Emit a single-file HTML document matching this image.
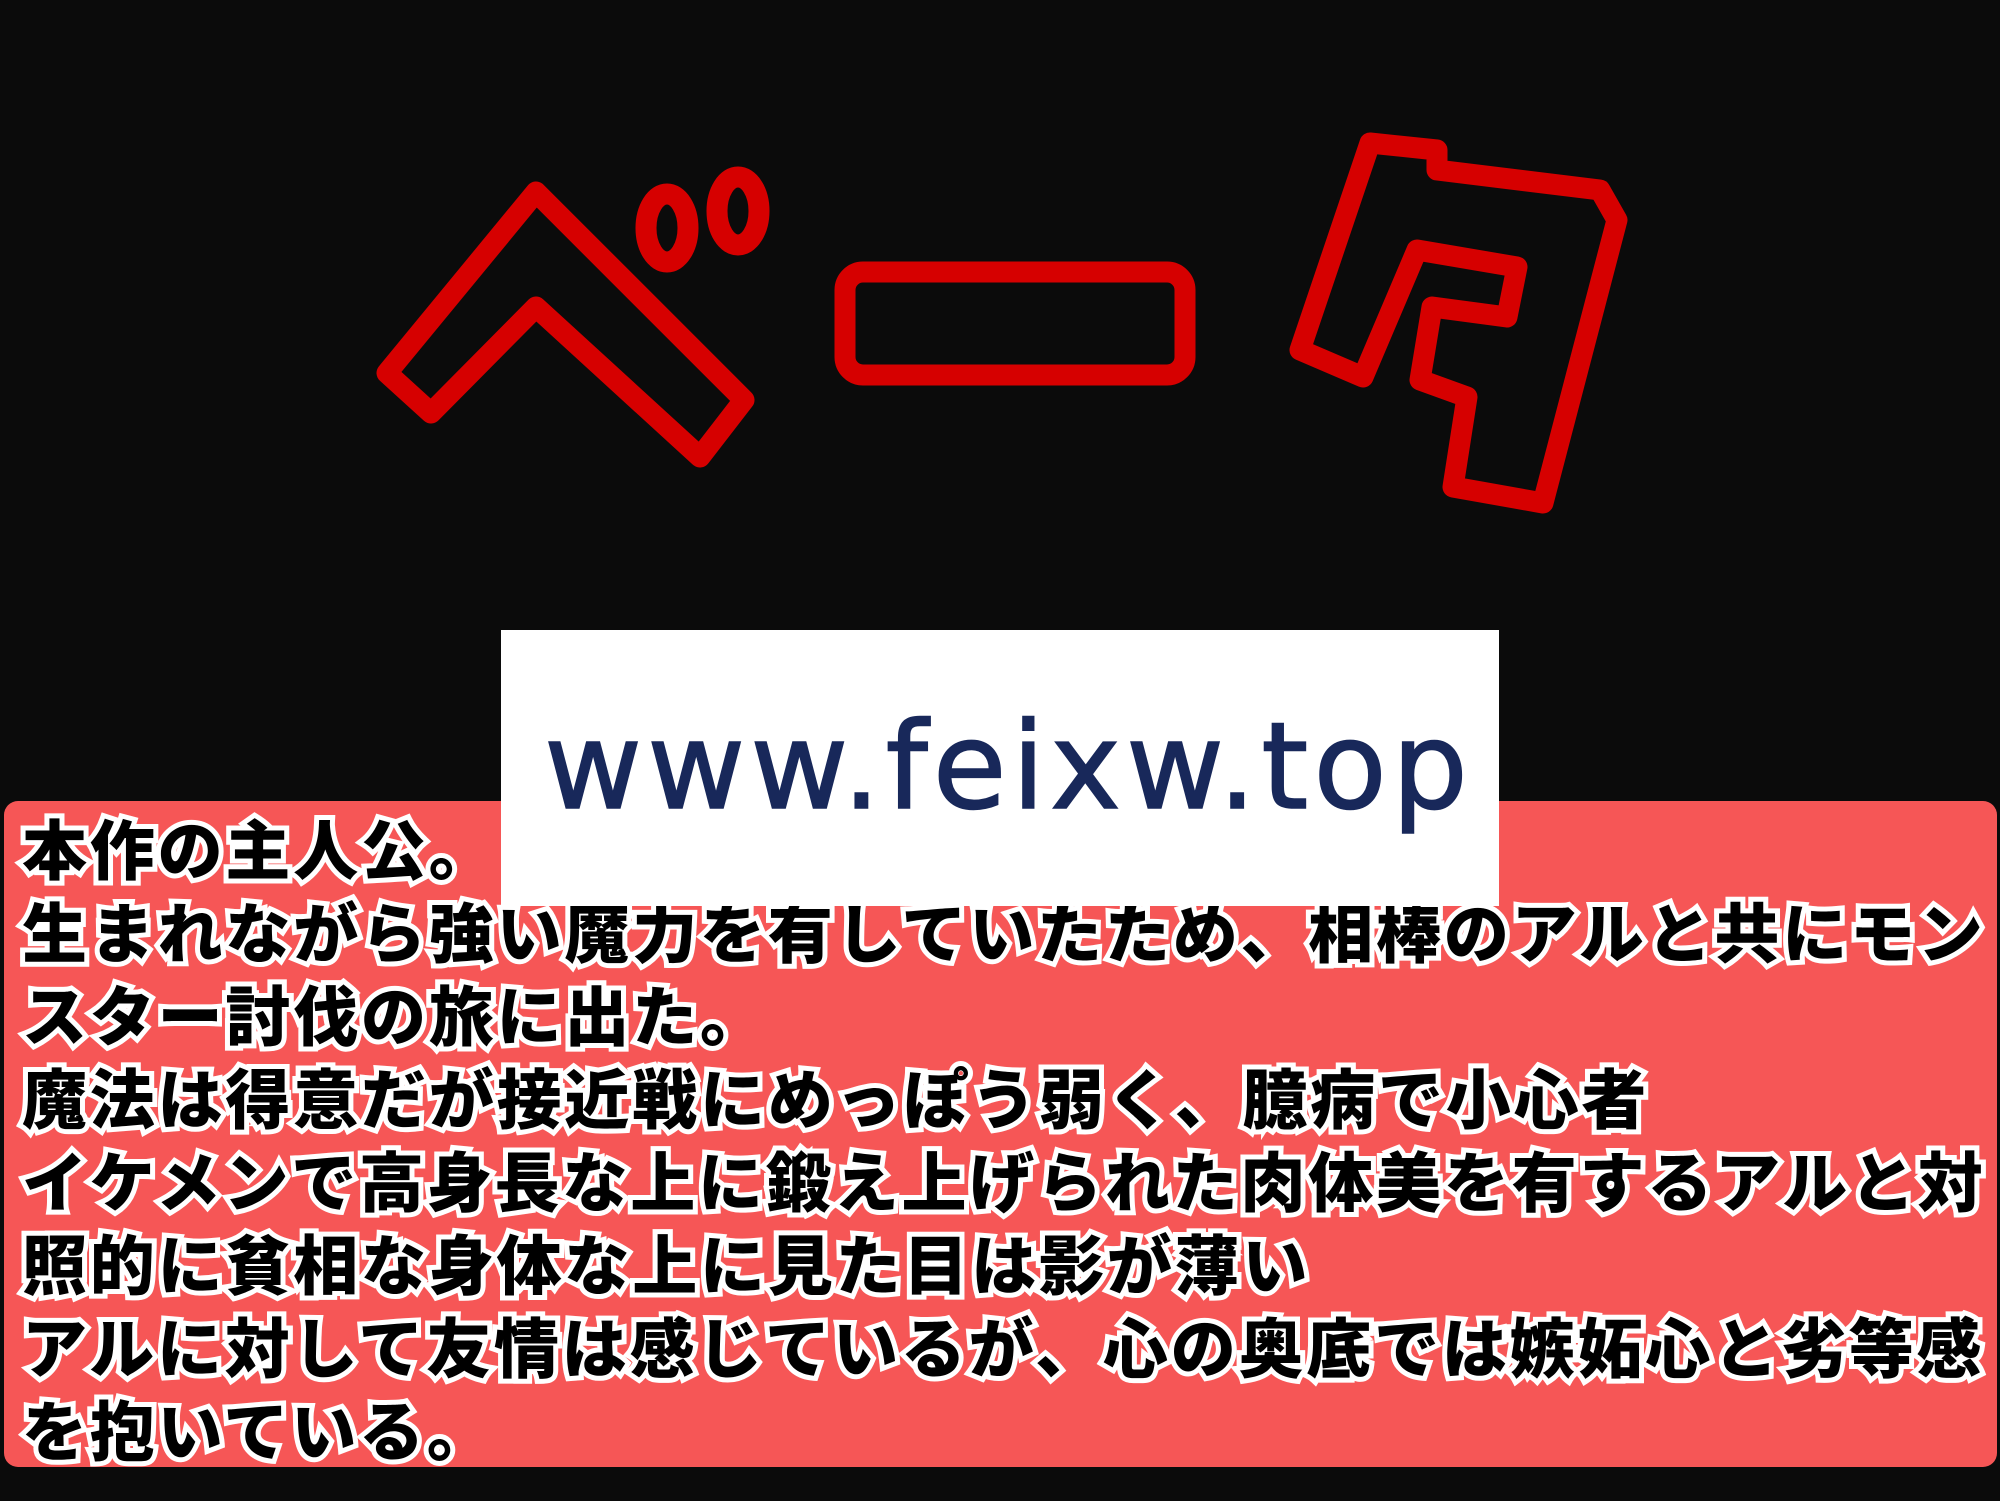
<!DOCTYPE html>
<html><head><meta charset="utf-8"><style>
html,body{margin:0;padding:0;}
body{width:2000px;height:1501px;background:#0b0b0b;position:relative;overflow:hidden;}
svg.t{position:absolute;left:0;top:0;}
.red{position:absolute;left:4px;top:801px;width:1993px;height:666px;background:#f65656;border-radius:14px;}
.white{position:absolute;left:501px;top:630px;width:998px;height:276px;background:#fff;z-index:3;}
.url{position:absolute;left:43px;top:78px;font-family:"DejaVu Sans","Liberation Sans",sans-serif;font-size:120px;color:#18285a;letter-spacing:5px;line-height:1;-webkit-text-stroke:1.5px #18285a;}
.txt{position:absolute;left:22px;top:810px;font-family:"Liberation Sans","Noto Sans CJK JP",sans-serif;font-weight:900;font-size:65px;letter-spacing:2.8px;line-height:83px;color:#000;-webkit-text-stroke:10px #fff;paint-order:stroke fill;white-space:nowrap;z-index:2;}
</style></head><body>
<svg class="t" width="2000" height="1501" viewBox="0 0 2000 1501">
<g fill="none" stroke="#d60000" stroke-width="21" stroke-linejoin="round">
<polygon points="536,192 744,400 700,457 536,307 431,413 387,373"/>
<ellipse cx="667" cy="228" rx="21" ry="34"/>
<ellipse cx="738" cy="211" rx="21" ry="34"/>
<rect x="845" y="272" width="340" height="103" rx="18"/>
<polygon points="1370,143 1437,150 1437,170 1600,190 1617,220 1543,503 1453,487 1467,397 1420,380 1432,307 1507,317 1517,267 1417,250 1363,377 1300,350"/>
</g>
</svg>
<div class="red"></div>
<div class="white"><div class="url">www.feixw.top</div></div>
<div class="txt">本作の主人公。<br>生まれながら強い魔力を有していたため、相棒のアルと共にモン<br>スター討伐の旅に出た。<br>魔法は得意だが接近戦にめっぽう弱く、臆病で小心者<br>イケメンで高身長な上に鍛え上げられた肉体美を有するアルと対<br>照的に貧相な身体な上に見た目は影が薄い<br>アルに対して友情は感じているが、心の奥底では嫉妬心と劣等感<br>を抱いている。</div>
</body></html>
